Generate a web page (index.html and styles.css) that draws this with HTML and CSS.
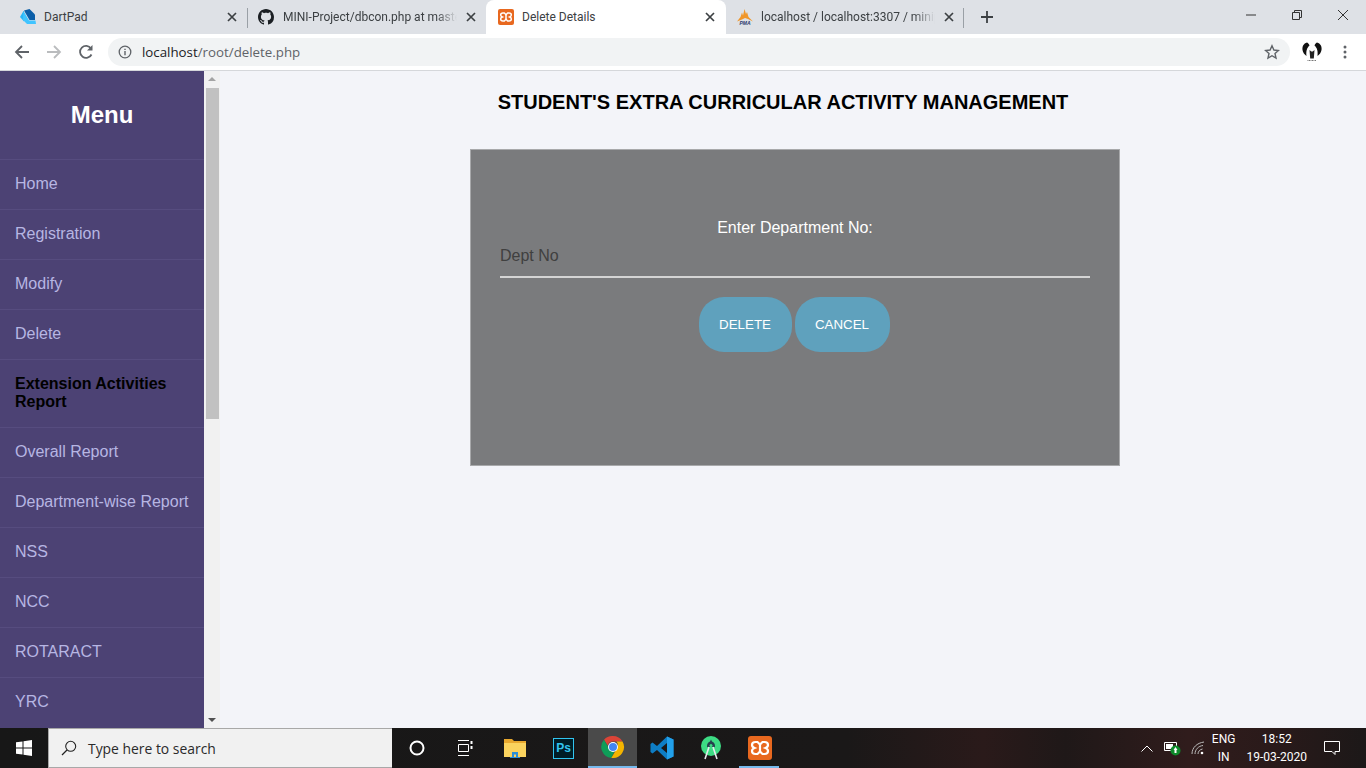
FILE: index.html
```html
<!DOCTYPE html>
<html lang="en">

<head>
    <meta charset="UTF-8">
    <meta name="viewport" content="width=device-width, initial-scale=1.0">
    <title>Delete Details</title>
    <link rel="stylesheet" href="styles.css">
</head>

<body>
    <svg class="icon-defs" width="0" height="0">
        <symbol id="xampp" viewBox="0 0 24 24">
            <rect width="24" height="24" rx="3" fill="#e8681f" />
            <path d="M7.500 6h2l2.500 2.500L14.500 6h2q3.500 0 3.500 3 0 2-2.500 3 2.500 1 2.500 3 0 3-3.500 3h-2L12 15.500 9.500 18h-2Q4 18 4 15q0-2 2.500-3Q4 11 4 9q0-3 3.500-3z" stroke="#fff" stroke-width="2.200" fill="none" />
            <path d="M12 8.500v7" stroke="#fff" stroke-width="2.200" />
        </symbol>
        <symbol id="tab-close" viewBox="0 0 10 10">
            <path d="M1 1l8 8M9 1L1 9" stroke="#3c4043" stroke-width="1.700" fill="none" />
        </symbol>
    </svg>

    <div class="tabstrip">
        <div class="tab tab-first">
            <svg class="tab-icon tab-icon-first" viewBox="0 0 16 16">
                <path d="M4 1.500L9.500 0 15 5.500V11H9.500z" fill="#0b5ea8" />
                <path d="M3.500 2L0 8l4 4.500V2z" fill="#29b6f6" />
                <path d="M3.500 2l5.500 9.500h6.500L16 15H7L3 11z" fill="#40c4ff" />
            </svg>
            <span class="tab-title">DartPad</span>
            <svg class="tab-close"><use href="#tab-close" /></svg>
        </div>
        <div class="tab tab-sep">
            <svg class="tab-icon" viewBox="0 0 16 16">
                <path fill="#1b1f23" d="M8 0C3.580 0 0 3.580 0 8c0 3.540 2.290 6.530 5.470 7.590.4.070.55-.17.55-.38 0-.19-.01-.82-.01-1.490-2.010.37-2.530-.49-2.690-.94-.09-.23-.48-.94-.82-1.130-.28-.15-.68-.52-.01-.53.63-.01 1.080.58 1.230.82.72 1.210 1.870.87 2.330.66.07-.52.28-.87.51-1.070-1.780-.2-3.640-.89-3.640-3.950 0-.87.31-1.590.82-2.150-.08-.2-.36-1.020.08-2.120 0 0 .67-.21 2.200.82.64-.18 1.320-.27 2-.27.68 0 1.360.09 2 .27 1.530-1.040 2.200-.82 2.200-.82.44 1.100.16 1.920.08 2.120.51.56.82 1.270.82 2.150 0 3.070-1.870 3.750-3.650 3.950.29.25.54.73.54 1.480 0 1.070-.01 1.930-.01 2.200 0 .21.15.46.55.38A8.013 8.013 0 0016 8c0-4.420-3.580-8-8-8z" />
            </svg>
            <span class="tab-title tab-title-fade">MINI-Project/dbcon.php at maste</span>
            <svg class="tab-close"><use href="#tab-close" /></svg>
        </div>
        <div class="tab tab-active">
            <svg class="tab-icon"><use href="#xampp" /></svg>
            <span class="tab-title">Delete Details</span>
            <svg class="tab-close"><use href="#tab-close" /></svg>
        </div>
        <div class="tab tab-last">
            <svg class="tab-icon" viewBox="0 0 16 16">
                <path d="M0 12.500L3.500 8 5 3.500l1 3L7.500 0l1.500 5 1-2 1.500 5 4.500 4.500-5-2.500L8 9l-3 1.500z" fill="#f0962a" />
                <text x="8" y="16" text-anchor="middle" class="pma-text">PMA</text>
            </svg>
            <span class="tab-title tab-title-fade">localhost / localhost:3307 / minip</span>
            <svg class="tab-close"><use href="#tab-close" /></svg>
        </div>
        <svg class="new-tab" viewBox="0 0 12 12">
            <path d="M6 0v12M0 6h12" stroke="#3c4043" stroke-width="1.800" />
        </svg>
        <div class="window-controls">
            <div class="window-btn">
                <svg width="12" height="12" viewBox="0 0 12 12"><path d="M1 6h10" stroke="#333" /></svg>
            </div>
            <div class="window-btn">
                <svg width="12" height="12" viewBox="0 0 12 12"><path d="M1.500 3.500h7v7h-7zM3.500 3.500v-2h7v7h-2" stroke="#333" fill="none" /></svg>
            </div>
            <div class="window-btn">
                <svg width="12" height="12" viewBox="0 0 12 12"><path d="M1 1l10 10M11 1L1 11" stroke="#333" /></svg>
            </div>
        </div>
    </div>

    <div class="toolbar">
        <svg class="tool-icon" viewBox="0 0 16 16"><path d="M15 8H2M8 2L2 8l6 6" stroke="#5f6368" stroke-width="1.800" fill="none" /></svg>
        <svg class="tool-icon" viewBox="0 0 16 16"><path d="M1 8h13M8 2l6 6-6 6" stroke="#babcbe" stroke-width="1.800" fill="none" /></svg>
        <svg class="tool-icon" viewBox="0 0 16 16"><path d="M13.500 10.500A6 6 0 1 1 13 4.500" stroke="#5f6368" stroke-width="1.800" fill="none" /><path d="M14.500 1v5.500H9z" fill="#5f6368" /></svg>
        <div class="addressbar">
            <svg class="info-icon" viewBox="0 0 14 14">
                <circle cx="7" cy="7" r="5.800" stroke="#5f6368" stroke-width="1.300" fill="none" />
                <path d="M7 6v4.300M7 3.700v1.400" stroke="#5f6368" stroke-width="1.400" />
            </svg>
            <span class="url"><span class="url-host">localhost</span>/root/delete.php</span>
            <svg class="star-icon" viewBox="0 0 16 16">
                <path d="M8 1.800l1.900 4.200 4.500.5-3.400 3 1 4.500L8 11.700 4 14l1-4.500-3.400-3 4.500-.5z" stroke="#5f6368" stroke-width="1.400" fill="none" />
            </svg>
        </div>
        <svg class="profile-icon" viewBox="0 0 20 20">
            <path d="M5 .5C1.500 1.500 0 4.500.5 8c.4 2.500 2 4.500 4 6C4 10 4.500 6 7.500 3.500 7 2 6.200 1 5 .5zM15 .5c3.500 1 5 4 4.500 7.500-.4 2.500-2 4.500-4 6 .5-4 0-8-3-10.500.5-1.500 1.300-2.500 2.500-3z" fill="#111" />
            <path d="M7.500 8l1.800 1.500h1.400L12.500 8l-.7 8.500H8.200z" fill="#222" />
            <path d="M5.500 18.500h9" stroke="#777" stroke-dasharray="1 .5" />
        </svg>
        <svg class="kebab-icon" viewBox="0 0 4 16">
            <circle cx="2" cy="3" r="1.500" fill="#5f6368" />
            <circle cx="2" cy="8" r="1.500" fill="#5f6368" />
            <circle cx="2" cy="13" r="1.500" fill="#5f6368" />
        </svg>
    </div>

    <div class="page">
        <div class="sidebar">
            <h2 class="menu-title">Menu</h2>
            <a class="menu-item">Home</a>
            <a class="menu-item">Registration</a>
            <a class="menu-item">Modify</a>
            <a class="menu-item">Delete</a>
            <a class="menu-item menu-item-current">Extension Activities Report</a>
            <a class="menu-item">Overall Report</a>
            <a class="menu-item">Department-wise Report</a>
            <a class="menu-item">NSS</a>
            <a class="menu-item">NCC</a>
            <a class="menu-item">ROTARACT</a>
            <a class="menu-item">YRC</a>
        </div>

        <div class="scrollbar">
            <span class="scroll-arrow scroll-arrow-up"></span>
            <div class="scroll-thumb"></div>
            <span class="scroll-arrow scroll-arrow-down"></span>
        </div>

        <div class="main">
            <h1 class="page-title">STUDENT'S EXTRA CURRICULAR ACTIVITY MANAGEMENT</h1>
            <div class="delete-card">
                <label class="dept-label" for="deptNo">Enter Department No:</label>
                <input class="dept-input" type="text" id="deptNo" placeholder="Dept No">
                <div class="card-buttons">
                    <button class="pill-btn">DELETE</button>
                    <button class="pill-btn pill-btn-wide">CANCEL</button>
                </div>
            </div>
        </div>
    </div>

    <div class="taskbar">
        <div class="start-btn">
            <svg width="16" height="16" viewBox="0 0 16 16">
                <path d="M0 2.300l6.500-.9v6.100H0zM7.500 1.300L16 0v7.500H7.500zM0 8.500h6.500v6.100L0 13.700zM7.500 8.500H16V16l-8.500-1.300z" fill="#fff" />
            </svg>
        </div>
        <div class="search-box">
            <svg class="search-icon" viewBox="0 0 16 16">
                <circle cx="9.700" cy="6.300" r="5" stroke="#222" stroke-width="1.100" fill="none" />
                <path d="M6 10L1 15" stroke="#222" stroke-width="1.300" />
            </svg>
            <span>Type here to search</span>
        </div>
        <div class="task-apps">
            <div class="task-app">
                <svg width="16" height="16" viewBox="0 0 16 16"><circle cx="8" cy="8" r="6.500" stroke="#fff" stroke-width="2" fill="none" /></svg>
            </div>
            <div class="task-app">
                <svg width="17" height="16" viewBox="0 0 17 16">
                    <path d="M1 .5h11M1 15.500h11M1.500 4.500h10v7h-10z" stroke="#fff" fill="none" />
                    <path d="M14.500 1v3M14.500 6v3" stroke="#fff" stroke-width="2" />
                </svg>
            </div>
            <div class="task-app">
                <svg width="22" height="20" viewBox="0 0 22 20">
                    <path d="M0 1h8l2 2h12v16H0z" fill="#e8a82e" />
                    <path d="M0 5h22v14H0z" fill="#fad35e" />
                    <path d="M8 19v-5h6v5h-2v-2.500h-2V19z" fill="#2b8fd6" />
                    <path d="M6 19h10v1H6z" fill="#2b8fd6" />
                </svg>
            </div>
            <div class="task-app">
                <div class="ps-icon">Ps</div>
            </div>
            <div class="task-app task-app-active">
                <svg width="24" height="24" viewBox="0 0 24 24">
                    <path d="M12 1a11 11 0 0 1 9.500 5.500H12a5.500 5.500 0 0 0-5.300 4L3 4.700A11 11 0 0 1 12 1z" fill="#db4437" />
                    <path d="M3 4.700l4.800 8.300a5.500 5.500 0 0 0 6 2.700L10.300 22.900A11 11 0 0 1 3 4.700z" fill="#0f9d58" />
                    <path d="M21.500 6.500A11 11 0 0 1 10.300 22.900l5-8.500a5.500 5.500 0 0 0 0-7.900z" fill="#f4b400" />
                    <circle cx="12" cy="12" r="5" fill="#fff" />
                    <circle cx="12" cy="12" r="4" fill="#4285f4" />
                </svg>
            </div>
            <div class="task-app">
                <svg width="24" height="24" viewBox="0 0 24 24">
                    <path d="M17 0.500L23.500 3.500V20.500L17 23.500 7 14 2.500 17.500.5 16V8L2.500 6.500 7 10zM17 7l-6 5 6 5z" fill="#0e7dc4" fill-rule="evenodd" />
                    <path d="M17 0.500L23.500 3.500V20.500L17 23.500z" fill="#22a0ea" />
                </svg>
            </div>
            <div class="task-app">
                <svg width="22" height="24" viewBox="0 0 22 24">
                    <circle cx="11" cy="10" r="10" fill="#3ddc84" />
                    <path d="M11 3.500l1 2c2 .6 3 2.300 3 4.500v1H7v-1c0-2.200 1-3.900 3-4.500z" fill="#27414f" />
                    <circle cx="11" cy="9.500" r="1.500" fill="#3ddc84" />
                    <path d="M9 11L5 23M13 11l4 12" stroke="#e8eaed" stroke-width="1.600" />
                </svg>
            </div>
            <div class="task-app task-app-open">
                <svg width="24" height="24"><use href="#xampp" /></svg>
            </div>
        </div>

        <div class="tray">
            <svg class="tray-chevron" viewBox="0 0 12 7"><path d="M.5 6.500L6 1l5.500 5.500" stroke="#fff" fill="none" /></svg>
            <svg class="tray-battery" viewBox="0 0 17 16">
                <path d="M.5 2.500h12v8H.5z" stroke="#fff" fill="none" />
                <path d="M2 4h7v5H2z" fill="#fff" />
                <circle cx="11.500" cy="10.500" r="5" fill="#0d8a2a" />
                <path d="M11.500 7l2 3h-1v3h-2v-3h-1z" fill="#fff" />
            </svg>
            <svg class="tray-wifi" viewBox="0 0 14 14">
                <path d="M1 13C1 6.500 6 2 13 1M4 13c0-4.500 3.500-8 8-8.500M7 13c0-2.500 1.800-4.500 4.500-5" stroke="#bbb" fill="none" />
                <circle cx="11" cy="12" r="1.300" fill="#fff" />
            </svg>
            <div class="tray-lang"><span>ENG</span><span>IN</span></div>
            <div class="tray-clock"><span>18:52</span><span>19-03-2020</span></div>
            <svg class="tray-notify" viewBox="0 0 16 16">
                <path d="M.5 1.500h15v10h-4.500v3l-3-3H.5z" stroke="#fff" fill="none" />
            </svg>
        </div>
    </div>
</body>

</html>
```

FILE: styles.css
```css
* {
    box-sizing: border-box;
}

body {
    margin: 0;
    height: 768px;
    overflow: hidden;
    display: flex;
    flex-direction: column;
    font-family: 'Liberation Sans', Arial, sans-serif;
    background-color: #f3f4f9;
}

.icon-defs {
    display: block;
    height: 0;
}

/* browser tabs */
.tabstrip {
    height: 34px;
    flex: none;
    display: flex;
    padding-left: 6px;
    background-color: #dee1e6;
    font-family: Roboto, sans-serif;
    font-size: 12px;
    color: #3c4043;
}

.tab {
    width: 240px;
    height: 34px;
    display: flex;
    align-items: center;
    padding: 0 8px 0 12px;
    position: relative;
}

.tab-first {
    padding-right: 6px;
}

.tab-sep {
    padding-right: 7px;
}

.tab-sep .tab-icon {
    margin-right: 9px;
}

.tab-sep::before,
.tab-last::after {
    content: '';
    position: absolute;
    top: 8px;
    width: 1px;
    height: 20px;
    background-color: #9aa0a6;
}

.tab-sep::before {
    left: 1px;
}

.tab-last {
    padding: 0 9px 0 11px;
}

.tab-last::after {
    right: 2px;
}

.tab-active {
    height: 37px;
    padding-bottom: 3px;
    background-color: #fff;
    border-radius: 8px 8px 0 0;
    z-index: 1;
}

.tab-icon {
    width: 16px;
    height: 16px;
    flex: none;
    margin-right: 8px;
}

.tab-icon-first {
    margin-left: 2px;
    margin-right: 8px;
}

.tab-title {
    flex: 1;
    min-width: 0;
    white-space: nowrap;
}

.tab-title-fade {
    -webkit-mask-image: linear-gradient(to right, #000 88%, transparent);
    mask-image: linear-gradient(to right, #000 88%, transparent);
}

.tab-close {
    width: 10px;
    height: 10px;
    flex: none;
    margin: 0 3px 0 9px;
}

.pma-text {
    font-family: 'Liberation Sans', sans-serif;
    font-size: 5px;
    font-weight: bold;
    font-style: italic;
    fill: #2b3a6b;
}

.new-tab {
    width: 12px;
    height: 12px;
    margin: 11px 0 0 15px;
}

.window-controls {
    margin-left: auto;
    display: flex;
}

.window-btn {
    width: 46px;
    height: 30px;
    display: flex;
    align-items: center;
    justify-content: center;
}

/* address bar row */
.toolbar {
    height: 37px;
    flex: none;
    display: flex;
    align-items: center;
    padding: 0 0 0 14px;
    background-color: #fff;
    border-bottom: 1px solid #d5d7db;
}

.tool-icon {
    width: 16px;
    height: 16px;
    margin-right: 16px;
}

.addressbar {
    width: 1182px;
    height: 28px;
    margin-left: -2px;
    display: flex;
    align-items: center;
    padding: 0 10px;
    border-radius: 14px;
    background-color: #f1f3f4;
    font-family: 'Open Sans', sans-serif;
    font-size: 13.3px;
    color: #5f6368;
}

.info-icon {
    width: 14px;
    height: 14px;
    margin-right: 10px;
}

.url-host {
    color: #202124;
}

.star-icon {
    width: 16px;
    height: 16px;
    margin-left: auto;
}

.profile-icon {
    width: 20px;
    height: 20px;
    margin-left: 12px;
}

.kebab-icon {
    width: 4px;
    height: 16px;
    margin-left: 21px;
}

/* page content */
.page {
    flex: 1;
    min-height: 0;
    display: flex;
}

.sidebar {
    width: 204px;
    flex: none;
    overflow: hidden;
    background-color: #4c4274;
}

.menu-title {
    height: 88px;
    margin: 0;
    padding-top: 30px;
    text-align: center;
    font-size: 24px;
    line-height: 28px;
    color: #fff;
}

.menu-item {
    display: block;
    padding: 15px 15px 16px;
    border-top: 1px solid #564c7f;
    font-size: 16px;
    line-height: 18px;
    color: #b7b6e3;
}

.menu-item-current {
    font-weight: bold;
    color: #000;
}

.scrollbar {
    width: 16px;
    flex: none;
    display: flex;
    flex-direction: column;
    align-items: center;
    background-color: #f1f1f1;
}

.scroll-arrow {
    width: 0;
    height: 0;
    border-left: 4px solid transparent;
    border-right: 4px solid transparent;
}

.scroll-arrow-up {
    margin-top: 6px;
    border-bottom: 4px solid #a3a3a3;
}

.scroll-arrow-down {
    margin-top: auto;
    margin-bottom: 6px;
    border-top: 4px solid #505050;
}

.scroll-thumb {
    width: 13px;
    height: 331px;
    margin-top: 7px;
    background-color: #c1c1c1;
}

.main {
    flex: 1;
    min-width: 0;
    padding-top: 19px;
}

.page-title {
    margin: 0;
    padding-right: 20px;
    text-align: center;
    font-size: 20px;
    line-height: 24px;
    color: #000;
}

.delete-card {
    width: 650px;
    height: 317px;
    margin: 35px 0 0 250px;
    padding: 69px 29px 0;
    display: flex;
    flex-direction: column;
    align-items: center;
    background-color: #7a7b7d;
    border: 1px solid #a8a9ab;
}

.dept-label {
    font-size: 16px;
    line-height: 18px;
    color: #fff;
}

.dept-input {
    width: 100%;
    height: 41px;
    padding: 0 0 2px;
    background: transparent;
    border: none;
    border-bottom: 2px solid #d4d4d4;
    outline: none;
    font-family: inherit;
    font-size: 16px;
    color: #fff;
}

.dept-input::placeholder {
    color: #404040;
    opacity: 1;
}

.card-buttons {
    display: flex;
    gap: 3px;
    margin: 19px 2px 0 0;
}

.pill-btn {
    width: 93px;
    height: 55px;
    padding: 0;
    border: none;
    border-radius: 25px;
    background-color: #5fa1bd;
    font-family: inherit;
    font-size: 13.333px;
    color: #fff;
}

.pill-btn-wide {
    width: 95px;
}

/* windows taskbar */
.taskbar {
    height: 40px;
    flex: none;
    display: flex;
    color: #fff;
    background: linear-gradient(to right, #171717 0, #1a1818 62%, #2a1a1a 72%, #1f1818 78%, #301c1c 87%, #2a1a1a 93%, #1c1818 100%);
}

.start-btn {
    width: 48px;
    display: flex;
    align-items: center;
    justify-content: center;
}

.search-box {
    width: 344px;
    display: flex;
    align-items: center;
    padding-left: 12px;
    background-color: #f1f1f1;
    border: 1px solid #a8a8a8;
    border-width: 1px 0 1px 1px;
    font-family: 'Open Sans', sans-serif;
    font-size: 13.9px;
    color: #2a2a2a;
}

.search-icon {
    width: 16px;
    height: 16px;
    margin-right: 11px;
}

.task-apps {
    display: flex;
}

.task-app {
    width: 49px;
    display: flex;
    align-items: center;
    justify-content: center;
    position: relative;
}

.task-app-active {
    background-color: #4a4a4a;
    border-bottom: 2px solid #76b9ed;
}

.task-app-open::after {
    content: '';
    position: absolute;
    left: 4px;
    right: 5px;
    bottom: 0;
    height: 2px;
    background-color: #76b9ed;
}

.ps-icon {
    width: 21px;
    height: 21px;
    border: 1.500px solid #31c5f0;
    background-color: #001d26;
    font-family: 'Liberation Sans', sans-serif;
    font-size: 12px;
    font-weight: bold;
    line-height: 18px;
    text-align: center;
    color: #31c5f0;
}

.tray {
    margin-left: auto;
    display: flex;
    align-items: center;
    padding-right: 5px;
    font-family: Roboto, sans-serif;
    font-size: 12px;
    line-height: 18px;
    text-align: center;
}

.tray-lang,
.tray-clock {
    display: flex;
    flex-direction: column;
}

.tray-chevron {
    width: 12px;
    height: 7px;
    margin-right: 11px;
}

.tray-battery {
    width: 17px;
    height: 16px;
    margin-right: 10px;
}

.tray-wifi {
    width: 14px;
    height: 14px;
    margin-right: 7px;
}

.tray-clock {
    margin-left: 11px;
}

.tray-notify {
    width: 16px;
    height: 16px;
    margin: 0 21px 0 17px;
}
```
